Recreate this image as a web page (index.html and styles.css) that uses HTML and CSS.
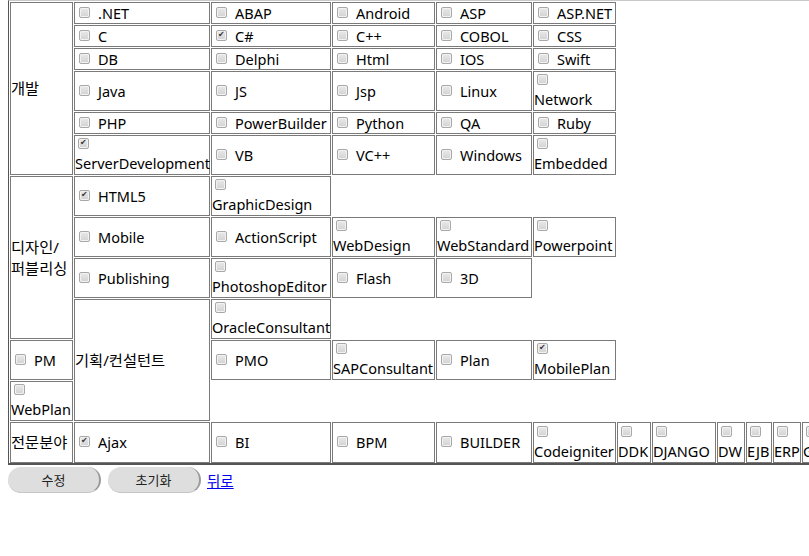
FILE: index.html
```html
<!DOCTYPE html>
<html>
<head>
    <title>희망 직무 수정</title>
    <meta charset="utf-8">
    <meta name="viewport" content="width=device-width, initial-scale=1">
    <link rel="stylesheet" href="styles.css">
</head>
<body>
    <form class="skill-form">
        <div class="skills">
            <div class="cell cat dev">개발</div>
            <label class="cell r1"><input type="checkbox">.NET</label>
            <label class="cell r1"><input type="checkbox">ABAP</label>
            <label class="cell r1"><input type="checkbox">Android</label>
            <label class="cell r1"><input type="checkbox">ASP</label>
            <label class="cell r1"><input type="checkbox">ASP.NET</label>

            <label class="cell r2"><input type="checkbox">C</label>
            <label class="cell r2"><input type="checkbox" checked>C#</label>
            <label class="cell r2"><input type="checkbox">C++</label>
            <label class="cell r2"><input type="checkbox">COBOL</label>
            <label class="cell r2"><input type="checkbox">CSS</label>

            <label class="cell r3"><input type="checkbox">DB</label>
            <label class="cell r3"><input type="checkbox">Delphi</label>
            <label class="cell r3"><input type="checkbox">Html</label>
            <label class="cell r3"><input type="checkbox">IOS</label>
            <label class="cell r3"><input type="checkbox">Swift</label>

            <label class="cell r4"><input type="checkbox">Java</label>
            <label class="cell r4"><input type="checkbox">JS</label>
            <label class="cell r4"><input type="checkbox">Jsp</label>
            <label class="cell r4"><input type="checkbox">Linux</label>
            <label class="cell wrap r4"><input type="checkbox">Network</label>

            <label class="cell r5"><input type="checkbox">PHP</label>
            <label class="cell r5"><input type="checkbox">PowerBuilder</label>
            <label class="cell r5"><input type="checkbox">Python</label>
            <label class="cell r5"><input type="checkbox">QA</label>
            <label class="cell r5"><input type="checkbox">Ruby</label>

            <label class="cell wrap r6"><input type="checkbox" checked>ServerDevelopment</label>
            <label class="cell r6"><input type="checkbox">VB</label>
            <label class="cell r6"><input type="checkbox">VC++</label>
            <label class="cell r6"><input type="checkbox">Windows</label>
            <label class="cell wrap r6"><input type="checkbox">Embedded</label>

            <div class="cell cat design">디자인/<br>퍼블리싱</div>
            <label class="cell r7"><input type="checkbox" checked>HTML5</label>
            <label class="cell wrap r7"><input type="checkbox">GraphicDesign</label>

            <label class="cell r8"><input type="checkbox">Mobile</label>
            <label class="cell r8"><input type="checkbox">ActionScript</label>
            <label class="cell wrap r8"><input type="checkbox">WebDesign</label>
            <label class="cell wrap r8"><input type="checkbox">WebStandard</label>
            <label class="cell wrap r8"><input type="checkbox">Powerpoint</label>

            <label class="cell r9"><input type="checkbox">Publishing</label>
            <label class="cell wrap r9"><input type="checkbox">PhotoshopEditor</label>
            <label class="cell r9"><input type="checkbox">Flash</label>
            <label class="cell r9"><input type="checkbox">3D</label>

            <div class="cell cat plan">기획/컨설턴트</div>
            <label class="cell wrap r10"><input type="checkbox">OracleConsultant</label>

            <label class="cell r11"><input type="checkbox">PM</label>
            <label class="cell r11"><input type="checkbox">PMO</label>
            <label class="cell wrap r11"><input type="checkbox">SAPConsultant</label>
            <label class="cell r11"><input type="checkbox">Plan</label>
            <label class="cell wrap r11"><input type="checkbox" checked>MobilePlan</label>

            <label class="cell wrap r12"><input type="checkbox">WebPlan</label>

            <div class="cell cat r13">전문분야</div>
            <label class="cell r13"><input type="checkbox" checked>Ajax</label>
            <label class="cell r13"><input type="checkbox">BI</label>
            <label class="cell r13"><input type="checkbox">BPM</label>
            <label class="cell r13"><input type="checkbox">BUILDER</label>
            <label class="cell wrap r13"><input type="checkbox">Codeigniter</label>
            <label class="cell wrap r13"><input type="checkbox">DDK</label>
            <label class="cell wrap r13"><input type="checkbox">DJANGO</label>
            <label class="cell wrap r13"><input type="checkbox">DW</label>
            <label class="cell wrap r13"><input type="checkbox">EJB</label>
            <label class="cell wrap r13"><input type="checkbox">ERP</label>
            <label class="cell wrap r13"><input type="checkbox">GIS</label>
        </div>
        <div class="actions">
            <button type="button" class="btn">수정</button>
            <button type="reset" class="btn">초기화</button>
            <a href="#" class="back">뒤로</a>
        </div>
    </form>
</body>
</html>
```

FILE: styles.css
```css
* { box-sizing: border-box; }
html, body { overflow: hidden; }
body { margin: 0; padding-left: 8px; font-family: "Noto Sans", "Noto Sans CJK KR", sans-serif; font-size: 14.5px; line-height: 21px; color: #000; background: #fff; }

.skills { display: grid; grid-template-columns: 63px 136px 120px 103px 96px 83px 34px 64px 28px 26px 28px 60px; grid-template-rows: 22px 22px 22px 40px 22px 40px 40px 40px 40px 40px 40px 40px 41px; gap: 1px; padding: 1px 0 0 1px; border-top: 1px solid #c8c8c8; border-left: 1px solid #555; border-bottom: 2px solid #555; }

.cell { display: flex; align-items: center; white-space: nowrap; border: 1px solid #7a7a7a; background: #fff; }
.wrap { flex-direction: column; align-items: flex-start; justify-content: center; }

.cat { font-size: 15.3px; }
.dev { grid-row: 1 / span 6; grid-column: 1; }
.design { grid-row: 7 / span 4; grid-column: 1; }
.plan { grid-row: 10 / span 3; grid-column: 2; }

.r1 { grid-row: 1; } .r2 { grid-row: 2; } .r3 { grid-row: 3; } .r4 { grid-row: 4; }
.r5 { grid-row: 5; } .r6 { grid-row: 6; } .r7 { grid-row: 7; } .r8 { grid-row: 8; }
.r9 { grid-row: 9; } .r10 { grid-row: 10; } .r11 { grid-row: 11; } .r12 { grid-row: 12; }
.r13 { grid-row: 13; }

.cell input { appearance: none; position: relative; flex: none; width: 11px; height: 11px; margin: 0 8px 2px 4px; border: 1px solid #a8a8a8; border-radius: 2px; background: linear-gradient(#e9e9e9, #d2d2d2); box-shadow: inset 0 0 0 1px #f2f2f2; }
.wrap input { margin: 2px 0 4px 3px; }
.cell input:checked::after { content: "\2714"; position: absolute; left: 1px; top: -1px; font-family: "DejaVu Sans", sans-serif; font-size: 8px; line-height: 10px; color: #333; }

.actions { display: flex; align-items: center; gap: 7px; margin-top: 2px; }
.btn { width: 93px; height: 26px; padding: 0; border: 0; border-right: 2px solid #9a9a9a; border-bottom: 1px solid #c6c6c6; border-radius: 13px; background: #dedede; font-family: "Noto Sans CJK KR", sans-serif; font-size: 13px; color: #222; }
.back { margin-left: -1px; font-family: "Noto Sans CJK KR", sans-serif; font-size: 14.5px; color: #0000ee; }
```
